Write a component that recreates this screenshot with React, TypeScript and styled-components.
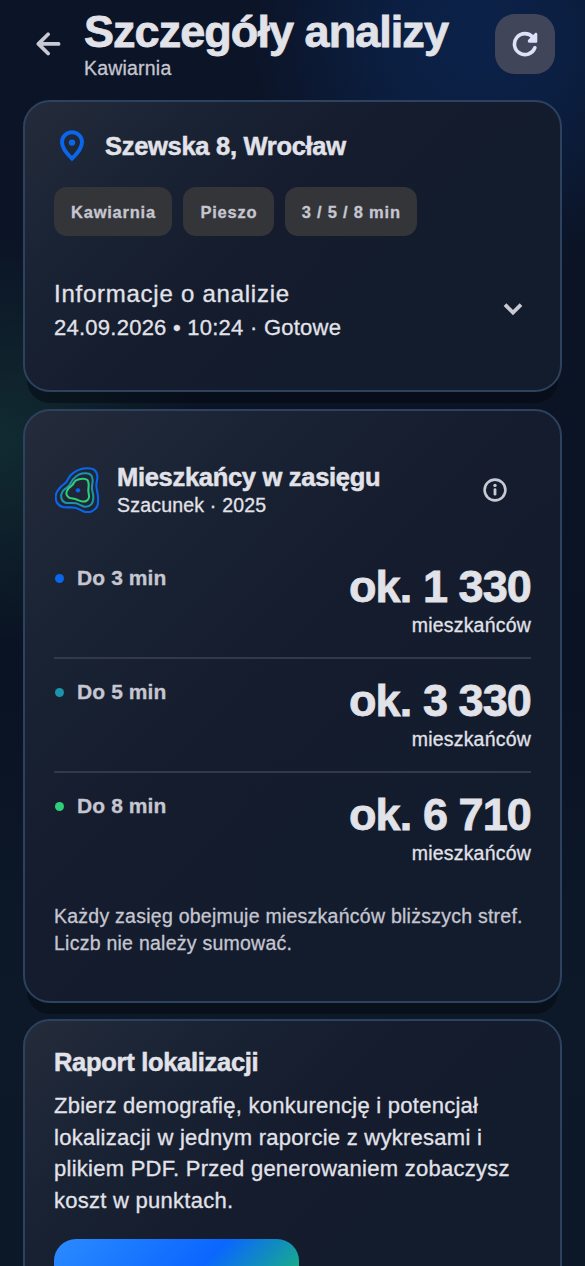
import React from 'react';
import styled, { createGlobalStyle } from 'styled-components';

const GlobalStyle = createGlobalStyle`
  * { box-sizing: border-box; }
  html, body { margin: 0; padding: 0; background: #0b1424; }
  body {
    font-family: "Liberation Sans", Arial, sans-serif;
    color: #e2e2e9;
    overflow: hidden;
    -webkit-text-stroke: 0.3px currentColor;
  }
  h1, h2, p { margin: 0; }
`;

const Screen = styled.main`
  width: 585px;
  height: 1266px;
  overflow: hidden;
  display: flex;
  flex-direction: column;
  background:
    radial-gradient(circle at 480px 40px, rgba(10, 56, 128, 0.38) 0, rgba(10, 56, 128, 0.3) 90px, rgba(10, 56, 128, 0) 230px),
    radial-gradient(circle at 0px 440px, rgba(28, 84, 70, 0.36) 0, rgba(28, 84, 70, 0) 200px),
    linear-gradient(180deg, #0c1427 0%, #0a1323 55%, #0d1929 80%, #0c1828 100%);
`;

const Header = styled.header`
  display: flex;
  align-items: flex-start;
  height: 100px;
  flex: none;
  padding: 9px 30px 0 36px;
`;

const BackButton = styled.button`
  display: flex;
  width: 48px;
  padding: 22px 0 0;
  border: 0;
  background: none;
`;

const Titles = styled.div`
  flex: 1;
`;

const PageTitle = styled.h1`
  margin-bottom: 1px;
  font-size: 45px;
  line-height: 45px;
  letter-spacing: -0.95px;
  white-space: nowrap;
  -webkit-text-stroke-width: 0.8px;
`;

const Subtitle = styled.p<{ $muted?: boolean }>`
  font-size: 19.5px;
  line-height: 27px;
  letter-spacing: 0.2px;
  color: ${(p) => (p.$muted ? '#c5c6d0' : '#e2e2e9')};
`;

const RefreshButton = styled.button`
  display: flex;
  align-items: center;
  justify-content: center;
  width: 60px;
  height: 60px;
  margin-top: 5px;
  padding: 0;
  border: 0;
  border-radius: 20px;
  background: #414559;
`;

const Cards = styled.div`
  display: flex;
  flex-direction: column;
  gap: 17px;
  padding: 0 23px 0 23px;
`;

const Card = styled.section<{ $height: number; $padTop?: number }>`
  flex: none;
  height: ${(p) => p.$height}px;
  padding: ${(p) => p.$padTop ?? 28}px 29px 0;
  border: 2px solid #2c425f;
  border-radius: 27px;
  background:
    linear-gradient(135deg, #242c3b 0%, #1a2334 22%, #141c2e 45%, #131c2d 75%, #121c2c 100%) border-box;
  box-shadow: 0 15px 0 -4px rgba(4, 7, 14, 0.5);
  &:last-child { margin-top: -1px; }
`;

const Row = styled.div<{ $top?: number }>`
  display: flex;
  align-items: center;
  margin-top: ${(p) => p.$top ?? 0}px;
`;

const CardTitle = styled.h2`
  font-size: 25.5px;
  line-height: 32px;
  letter-spacing: -0.3px;
  -webkit-text-stroke-width: 0.5px;
`;

const PinSlot = styled.span`
  display: flex;
  width: 51px;
  padding-left: 6px;
`;

const Chips = styled.div`
  display: flex;
  gap: 11px;
  margin-top: 25px;
`;

const Chip = styled.span`
  height: 49px;
  padding: 0 16.5px 0 17px;
  border-radius: 13px;
  background: #343539;
  color: #c5c6d0;
  font-size: 16.5px;
  font-weight: 700;
  line-height: 51px;
  letter-spacing: 0.77px;
`;

const Spacer = styled.div`
  flex: 1;
`;

const InfoTitle = styled.p`
  font-size: 24px;
  line-height: 34px;
  letter-spacing: 0.75px;
`;

const InfoMeta = styled.p`
  font-size: 22px;
  line-height: 34px;
  letter-spacing: 0.25px;
`;

const ChevronSlot = styled.span`
  display: flex;
  margin-top: -4px;
  padding-right: 8px;
`;

const InfoSlot = styled.span`
  display: flex;
  padding-right: 24px;
`;

const ZoneSlot = styled.span`
  display: flex;
  width: 63px;
  margin-top: -1px;
  padding-left: 1px;
`;

const Source = styled(Subtitle)`
  margin-top: -1px;
`;

const Zones = styled.div`
  margin-top: 26px;
`;

const Zone = styled.div`
  display: flex;
  justify-content: space-between;
  height: 114px;
  padding-top: 17px;
  border-bottom: 2px solid #333946;
  &:last-child { border-bottom: 0; }
`;

const ZoneLabel = styled.div`
  display: flex;
  align-items: center;
  gap: 13px;
  height: 32px;
  color: #c5c6d0;
  font-size: 21px;
  font-weight: 700;
  letter-spacing: 0.1px;
`;

const Dot = styled.i<{ $color: string }>`
  width: 9px;
  height: 9px;
  margin-left: 1px;
  border-radius: 50%;
  background: ${(p) => p.$color};
`;

const ZoneValue = styled.div`
  text-align: right;
`;

const Amount = styled.div`
  font-size: 45px;
  font-weight: 700;
  line-height: 50px;
  letter-spacing: -0.9px;
  -webkit-text-stroke-width: 0.8px;
`;

const Note = styled.p`
  margin-top: 16px;
  color: #c5c6d0;
  font-size: 19.5px;
  line-height: 27px;
  letter-spacing: 0.25px;
`;

const Body = styled.p`
  margin-top: 12px;
  font-size: 22px;
  line-height: 31.5px;
  letter-spacing: 0.26px;
`;

const PrimaryButton = styled.button`
  display: block;
  width: 245px;
  height: 72px;
  margin-top: 23px;
  border: 0;
  border-radius: 22px;
  background: linear-gradient(135deg, #2b8bff 0%, #0a66ff 55%, #17a98f 85%, #22c07a 100%);
`;

const BackIcon = () => (
  <svg width="25" height="26" viewBox="0 0 25 26" fill="none" stroke="#c9c9d3" strokeWidth="3.7" strokeLinecap="round" strokeLinejoin="round">
    <path d="M22.6 12.9H3M12.1 3.2L2.4 12.9l9.7 9.6" />
  </svg>
);

const RefreshIcon = () => (
  <svg width="26" height="26" viewBox="0 0 26 26" fill="none">
    <path d="M20.9 6.2A10.5 10.5 0 1 0 22.8 16.8" stroke="#dde1f9" strokeWidth="3.6" strokeLinecap="round" />
    <path d="M25.3 3.3v7.3a1.2 1.2 0 0 1-1.2 1.2h-6.6c-1.6 0-2.3-1.9-1.2-3l6.6-6.5c1-.9 2.4-.3 2.4 1z" fill="#dde1f9" />
  </svg>
);

const PinIcon = () => (
  <svg width="24" height="32" viewBox="0 0 24 32" fill="none">
    <path d="M12 28.6C7 23.8 2 18 2 12.2a10 10 0 0 1 20 0C22 18 17 23.8 12 28.6z" stroke="#0a66eb" strokeWidth="3.9" />
    <circle cx="12" cy="12.6" r="3.2" fill="#0a66eb" />
  </svg>
);

const ChevronIcon = () => (
  <svg width="20" height="14" viewBox="0 0 20 14" fill="none" stroke="#c9c9d3" strokeWidth="3.8">
    <path d="M2 2.6L10 10.6l8-8" />
  </svg>
);

const InfoIcon = () => (
  <svg width="24" height="24" viewBox="0 0 24 24" fill="none" stroke="#c9c9d3">
    <circle cx="12" cy="12" r="10.4" strokeWidth="2.6" />
    <path d="M12 11.6v4.6" strokeWidth="2.8" strokeLinecap="round" />
    <circle cx="12" cy="7.4" r="1.7" fill="#c9c9d3" stroke="none" />
  </svg>
);

type Point = [number, number];

// Closed Catmull-Rom curve through the contour points.
const contour = (pts: Point[]) => {
  const n = pts.length;
  const at = (i: number) => pts[(i + n) % n];
  const parts = pts.map((p, i) => {
    const prev = at(i - 1);
    const next = at(i + 1);
    const after = at(i + 2);
    const c1 = [p[0] + (next[0] - prev[0]) / 6, p[1] + (next[1] - prev[1]) / 6];
    const c2 = [next[0] - (after[0] - p[0]) / 6, next[1] - (after[1] - p[1]) / 6];
    return `C${c1.join(' ')} ${c2.join(' ')} ${next.join(' ')}`;
  });
  return `M${pts[0].join(' ')}${parts.join('')}z`;
};

const rings: { color: string; points: Point[] }[] = [
  {
    color: '#0a66eb',
    points: [[140, 55], [162, 59], [172, 78], [169, 108], [174, 140], [172, 168], [155, 184], [133, 185], [105, 173], [68, 171], [50, 156], [49, 130], [62, 111], [78, 97], [92, 76], [113, 61]],
  },
  {
    color: '#1c93a8',
    points: [[138, 70], [153, 75], [158, 90], [156, 115], [160, 142], [154, 163], [134, 170], [108, 160], [76, 158], [64, 144], [68, 124], [86, 108], [99, 88], [116, 74]],
  },
  {
    color: '#2fce78',
    points: [[128, 86], [142, 90], [146, 103], [145, 122], [147, 142], [139, 153], [124, 154], [106, 147], [87, 143], [79, 131], [85, 116], [97, 105], [108, 91]],
  },
];

const ReachIcon = () => (
  <svg width="45" height="46" viewBox="45 51 135 138" fill="none" strokeWidth="6.2">
    {rings.map((r) => (
      <path key={r.color} stroke={r.color} d={contour(r.points)} />
    ))}
    <circle cx="114" cy="121" r="6.6" fill="#0a66eb" />
  </svg>
);

const zones = [
  { label: 'Do 3 min', amount: 'ok. 1 330', color: '#0a66eb' },
  { label: 'Do 5 min', amount: 'ok. 3 330', color: '#1c93a8' },
  { label: 'Do 8 min', amount: 'ok. 6 710', color: '#2fce78' },
];

export default function App() {
  return (
    <Screen>
      <GlobalStyle />
      <Header>
        <BackButton aria-label="Wstecz"><BackIcon /></BackButton>
        <Titles>
          <PageTitle>Szczegóły analizy</PageTitle>
          <Subtitle $muted>Kawiarnia</Subtitle>
        </Titles>
        <RefreshButton aria-label="Odśwież"><RefreshIcon /></RefreshButton>
      </Header>
      <Cards>
        <Card $height={292}>
          <Row>
            <PinSlot><PinIcon /></PinSlot>
            <CardTitle>Szewska 8, Wrocław</CardTitle>
          </Row>
          <Chips>
            <Chip>Kawiarnia</Chip>
            <Chip>Pieszo</Chip>
            <Chip>3 / 5 / 8 min</Chip>
          </Chips>
          <Row $top={41}>
            <div>
              <InfoTitle>Informacje o analizie</InfoTitle>
              <InfoMeta>24.09.2026 • 10:24 · Gotowe</InfoMeta>
            </div>
            <Spacer />
            <ChevronSlot><ChevronIcon /></ChevronSlot>
          </Row>
        </Card>
        <Card $height={594}>
          <Row $top={22}>
            <ZoneSlot><ReachIcon /></ZoneSlot>
            <div>
              <CardTitle>Mieszkańcy w zasięgu</CardTitle>
              <Source>Szacunek · 2025</Source>
            </div>
            <Spacer />
            <InfoSlot><InfoIcon /></InfoSlot>
          </Row>
          <Zones>
            {zones.map((z) => (
              <Zone key={z.label}>
                <ZoneLabel><Dot $color={z.color} />{z.label}</ZoneLabel>
                <ZoneValue>
                  <Amount>{z.amount}</Amount>
                  <Subtitle>mieszkańców</Subtitle>
                </ZoneValue>
              </Zone>
            ))}
          </Zones>
          <Note>Każdy zasięg obejmuje mieszkańców bliższych stref.<br />Liczb nie należy sumować.</Note>
        </Card>
        <Card $height={330} $padTop={25}>
          <CardTitle>Raport lokalizacji</CardTitle>
          <Body>
            Zbierz demografię, konkurencję i potencjał<br />
            lokalizacji w jednym raporcie z wykresami i<br />
            plikiem PDF. Przed generowaniem zobaczysz<br />
            koszt w punktach.
          </Body>
          <PrimaryButton aria-label="Generuj raport" />
        </Card>
      </Cards>
    </Screen>
  );
}
